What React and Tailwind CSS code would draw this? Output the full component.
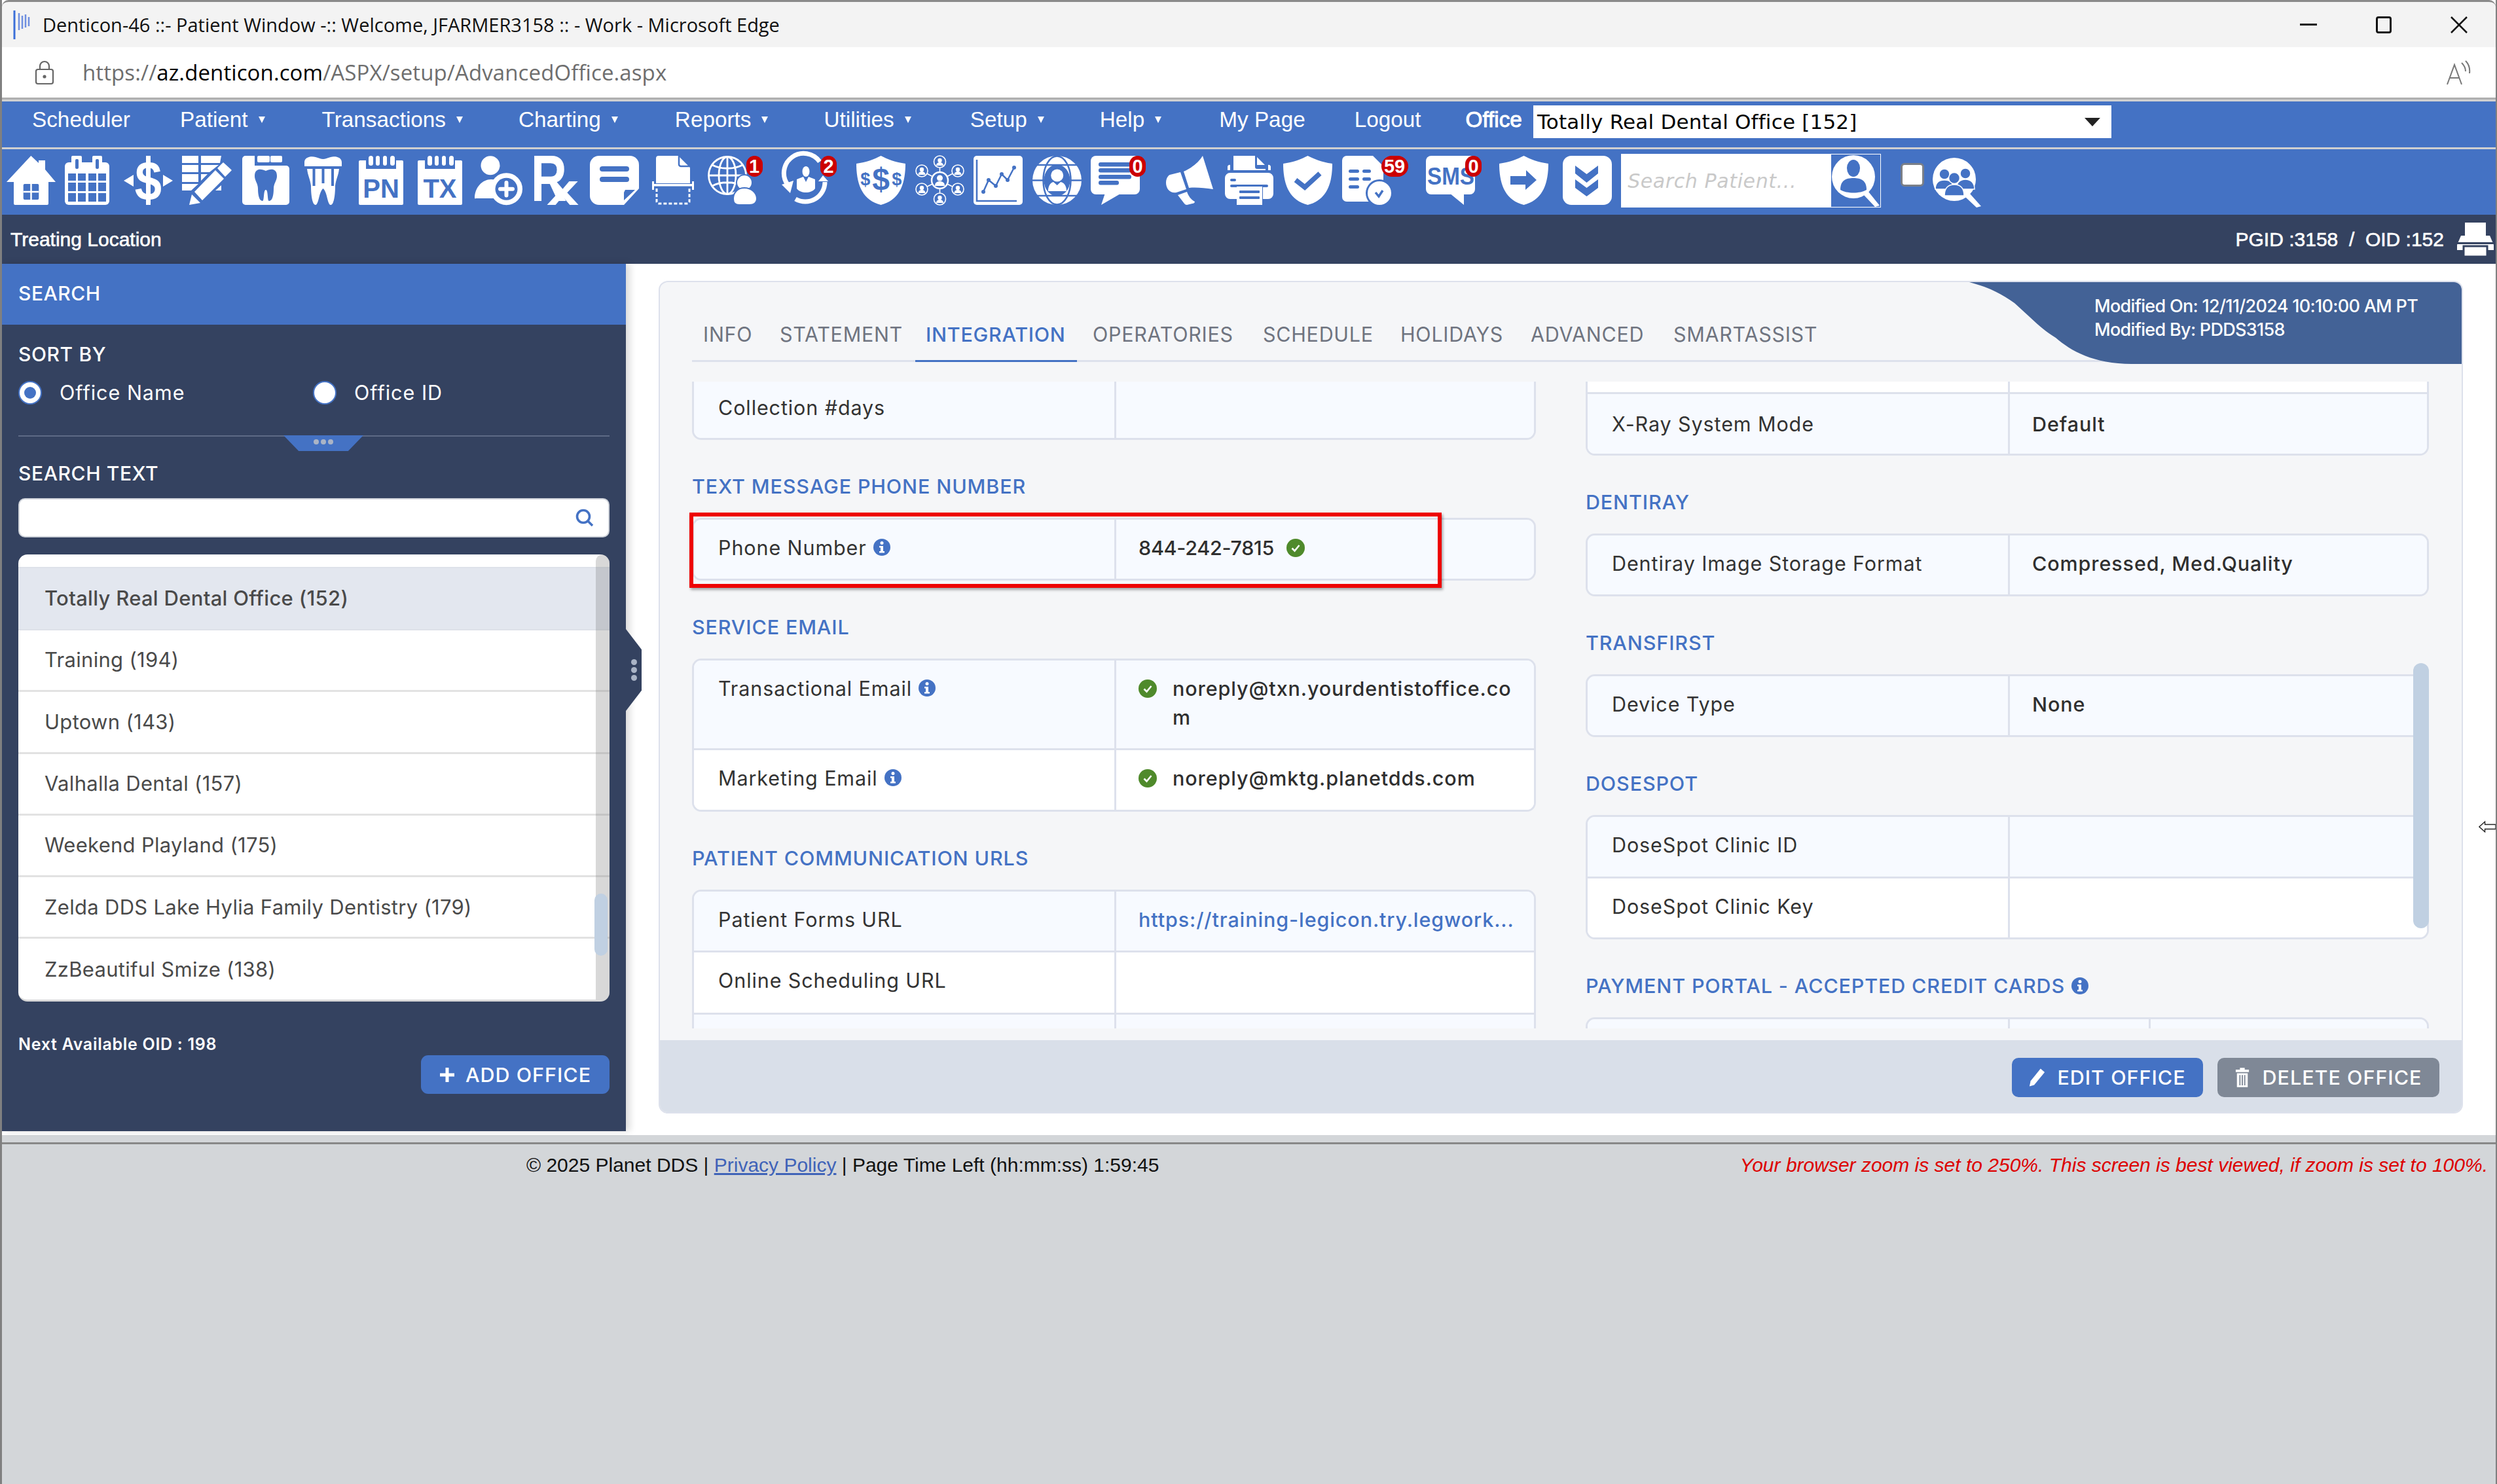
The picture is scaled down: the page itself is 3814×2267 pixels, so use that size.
import React from 'react'

const Ico = ({ children, className = '' }) => (
  <svg viewBox="0 0 75 75" fill="white" className={`w-[75px] h-[75px] shrink-0 overflow-visible ${className}`}>
    {children}
  </svg>
)

const SHIELD = 'M37.5 0C47 5 60 10 75 12C75 45 65 68 37.5 75C10 68 0 45 0 12C15 10 28 5 37.5 0Z'
const BLUE = '#4472c4'
const ARIAL = 'Liberation Sans, Arial, sans-serif'

const Badge = ({ children, className = '' }) => (
  <span className={`absolute top-0 h-[32px] rounded-full bg-[#cc0000] text-white text-[29px] leading-[32px] font-bold text-center font-['Liberation_Sans',sans-serif] ${className}`}>
    {children}
  </span>
)

const House = () => (
  <Ico>
    <path d="M37.3 0L49 11V7H59V21L75 40H64V73A2 2 0 0 1 62 75H13A2 2 0 0 1 11 73V40H0Z" />
    <rect x="25.7" y="43" width="23.6" height="24" rx="2" fill={BLUE} />
    <path d="M37.5 43V67M25.7 55H49.3" stroke="white" strokeWidth="2.5" />
  </Ico>
)

const Calendar = () => {
  const xs = [5, 20, 36, 51]
  const ys = [[27, 11], [41, 13], [57, 13]]
  return (
    <Ico>
      <rect x="0" y="10" width="68" height="65" rx="6" />
      <rect x="10" y="0" width="16" height="24" rx="2" />
      <rect x="42" y="0" width="15" height="24" rx="2" />
      <rect x="16" y="5" width="5" height="15" rx="2" fill={BLUE} />
      <rect x="47" y="5" width="5" height="15" rx="2" fill={BLUE} />
      {ys.map(([y, h]) => xs.map(x => <rect key={`${x}-${y}`} x={x} y={y} width="12" height={h} fill={BLUE} />))}
    </Ico>
  )
}

const Dollar = () => (
  <Ico>
    <rect x="34" y="0" width="7" height="75" />
    <path d="M0 38L15 29V47ZM75 38L60 29V47Z" />
    <text transform="translate(37.5 66) scale(0.82 1)" fontSize="80" fontWeight="700" textAnchor="middle" fontFamily={ARIAL}>S</text>
  </Ico>
)

const ListPencil = () => (
  <Ico>
    <path d="M0 0H25V11H0ZM29 0H60L58 11H29ZM0 14H25V25H0ZM29 14H56L42 25H29ZM0 28H25V40H0ZM29 28H39L29 38ZM0 43H25L14 53H0ZM51 53H60V45Z" />
    <path d="M51 22L64 35L31 68L19 55Z" />
    <path d="M15 59L28 72L11 75Z" />
    <path d="M55 19L63 11L75 22L66 31Z" strokeLinejoin="round" stroke="white" strokeWidth="1.5" />
  </Ico>
)

const ToothBook = () => (
  <Ico>
    <path d="M2 5A5 5 0 0 1 7 0H21V15H69A5 5 0 0 1 74 20V70A5 5 0 0 1 69 75H7A5 5 0 0 1 2 70Z" />
    <rect x="25" y="0" width="19" height="10" rx="2" />
    <rect x="45" y="0" width="18" height="10" rx="2" />
    <path d="M38 23C32 20 21 18 21 31C21 38 26 42 26 50C26 60 28 69 33 69C36 69 34 52 38 52C42 52 40 69 43 69C48 69 50 60 50 50C50 42 55 38 55 31C55 18 44 20 38 23Z" fill={BLUE} />
  </Ico>
)

const Tooth = () => (
  <Ico>
    <path d="M8 10C8 2 18 0 25 2C30 3 33 5 36.5 5C40 5 43 3 48 2C55 0 65 2 65 10V16H8Z" />
    <path d="M12 20H61C60 30 56 36 55 46C55 60 53 75 48 75C43 75 43 55 36.5 50C30 55 30 75 25 75C20 75 18 60 18 46C17 36 13 30 12 20Z" />
    <path d="M22.5 20V46M36.5 20V42M51 20V46" stroke={BLUE} strokeWidth="4" />
  </Ico>
)

const Notebook = ({ label }) => (
  <Ico>
    <rect x="2" y="7" width="68" height="68" rx="2" />
    <rect x="13" y="7" width="46" height="13" fill={BLUE} />
    <rect x="17" y="0" width="7" height="15" rx="3.5" />
    <rect x="28" y="0" width="6" height="15" rx="3" />
    <rect x="39" y="0" width="6" height="15" rx="3" />
    <rect x="50" y="0" width="7" height="15" rx="3.5" />
    <text x="36" y="64" fontSize="40" fontWeight="700" textAnchor="middle" fontFamily={ARIAL} fill={BLUE}>{label}</text>
  </Ico>
)

const PersonPlus = () => (
  <Ico>
    <circle cx="24" cy="14.7" r="14.5" />
    <path d="M0 65C0 48 12 36 25 36C30 36 33 37 36 39C31 45 28 54 29 65H2A2 2 0 0 1 0 65Z" />
    <circle cx="48.5" cy="50.7" r="24.5" />
    <circle cx="48.5" cy="50.7" r="17" fill={BLUE} />
    <path d="M48.5 41V60.5M39 50.7H58" stroke="white" strokeWidth="6" strokeLinecap="round" />
  </Ico>
)

const Rx = () => (
  <Ico>
    <text transform="translate(-4 69) scale(0.76 1)" fontSize="100" fontWeight="700" fontFamily={ARIAL}>R</text>
    <text transform="translate(20 75) scale(1.3 1)" fontSize="68" fontWeight="700" fontFamily={ARIAL}>x</text>
  </Ico>
)

const Note = () => (
  <Ico>
    <path d="M14 0H61A14 14 0 0 1 75 14V50L52 75H14A14 14 0 0 1 0 61V14A14 14 0 0 1 14 0Z" />
    <path d="M54 52H69L52 68V56Z" fill={BLUE} />
    <rect x="15" y="16" width="45" height="8" rx="4" fill={BLUE} />
    <rect x="15" y="32" width="45" height="8" rx="4" fill={BLUE} />
  </Ico>
)

const ScanDoc = () => (
  <Ico>
    <path d="M10 0H40L58 18V42H6V4A4 4 0 0 1 10 0Z" />
    <path d="M41 0V13A3 3 0 0 0 44 16H58" fill="none" stroke={BLUE} strokeWidth="2.5" />
    <rect x="0" y="43" width="64" height="3.5" />
    <path d="M1.5 39V52M62.5 39V52" stroke="white" strokeWidth="3" />
    <path d="M7 50V70A3 3 0 0 0 10 73H54A3 3 0 0 0 57 70V50" fill="none" stroke="white" strokeWidth="3" strokeDasharray="5 3" />
  </Ico>
)

const GlobePeople = () => (
  <Ico>
    <g fill="none" stroke="white" strokeWidth="2.8">
      <circle cx="30" cy="30" r="28.5" />
      <ellipse cx="30" cy="30" rx="13" ry="28.5" />
      <path d="M30 2V58M2 30H58M7 14C20 21 40 21 53 14M7 46C20 39 40 39 53 46" />
    </g>
    <circle cx="56" cy="41" r="12" stroke={BLUE} strokeWidth="2" />
    <path d="M39 66C39 56 46 49 56 49S75 56 75 66C75 72 70 75 64 75H48C43 75 39 72 39 66Z" stroke={BLUE} strokeWidth="2" />
  </Ico>
)

const RefreshPerson = () => (
  <Ico>
    <path d="M58 9A30 30 0 0 0 9 44" fill="none" stroke="white" strokeWidth="7" />
    <path d="M0 44L18 38L13 57Z" />
    <path d="M21 66A30 30 0 0 0 66 40" fill="none" stroke="white" strokeWidth="7" />
    <path d="M63 30L56 39H71Z" />
    <ellipse cx="37" cy="24" rx="5.5" ry="8" />
    <path d="M23 36C27 34 31 33 33 32L37 40L41 32C43 33 47 34 51 36V50C45 58 29 58 23 50Z" />
  </Ico>
)

const ShieldMoney = () => (
  <Ico>
    <path d={SHIELD} />
    <g fill={BLUE} fontWeight="700" textAnchor="middle" fontFamily={ARIAL}>
      <text x="13.7" y="45" fontSize="27">$</text>
      <text x="37.5" y="52" fontSize="48">$</text>
      <text x="61.7" y="45" fontSize="27">$</text>
    </g>
  </Ico>
)

const Network = () => {
  const spots = [[37.5, 9], [37.5, 66], [10, 23], [65, 23], [10, 51], [65, 51]]
  return (
    <Ico>
      {spots.map(([x, y]) => (
        <g key={`${x}-${y}`}>
          <path d={`M37.5 37.5L${x} ${y}`} stroke="white" strokeWidth="1.6" />
          <circle cx={x} cy={y} r="9" fill={BLUE} stroke="white" strokeWidth="1.6" />
          <circle cx={x} cy={y - 2} r="3.2" />
          <path d={`M${x - 5.5} ${y + 6}C${x - 5.5} ${y + 2} ${x - 2} ${y + 1} ${x} ${y + 1}S${x + 5.5} ${y + 2} ${x + 5.5} ${y + 6}Z`} />
        </g>
      ))}
      <circle cx="37.5" cy="37.5" r="12.5" fill={BLUE} stroke="white" strokeWidth="2.5" />
      <circle cx="37.5" cy="34" r="4.5" />
      <path d="M30 46C30 41 33 39 37.5 39S45 41 45 46Z" />
    </Ico>
  )
}

const Chart = () => (
  <Ico>
    <rect x="0" y="0" width="75" height="75" rx="5" />
    <path d="M5 6V69H66" fill="none" stroke={BLUE} strokeWidth="2.5" />
    <path d="M15 55L23 37L34 46L43 28L52 37L62 18" fill="none" stroke={BLUE} strokeWidth="2.5" />
    <g fill={BLUE}>
      <circle cx="15" cy="55" r="3" /><circle cx="23" cy="37" r="3" /><circle cx="34" cy="46" r="3" />
      <circle cx="43" cy="28" r="3" /><circle cx="52" cy="37" r="3" /><circle cx="62" cy="18" r="3" />
    </g>
  </Ico>
)

const GlobePerson = () => (
  <Ico>
    <circle cx="37.5" cy="37.5" r="37.5" />
    <path d="M0 14H75M0 37.5H75M0 61H75" stroke={BLUE} strokeWidth="2.5" />
    <ellipse cx="37.5" cy="37.5" rx="21" ry="37" fill="none" stroke={BLUE} strokeWidth="2.5" />
    <ellipse cx="37.5" cy="37.5" rx="20" ry="24" fill={BLUE} />
    <circle cx="37.7" cy="30" r="9.5" />
    <path d="M24 54C24 45 28 41 32 40L37.7 45L43 40C48 41 52 45 52 54Z" />
  </Ico>
)

const Message = () => (
  <Ico>
    <rect x="0" y="0" width="75" height="59" rx="8" />
    <path d="M22 57L16 75L47 57Z" />
    <rect x="12" y="10" width="50" height="6.5" rx="3" fill={BLUE} />
    <rect x="12" y="19" width="50" height="6.5" rx="3" fill={BLUE} />
    <rect x="12" y="29" width="50" height="6.5" rx="3" fill={BLUE} />
    <rect x="12" y="38" width="31" height="6.5" rx="3" fill={BLUE} />
  </Ico>
)

const Megaphone = () => (
  <Ico>
    <path d="M27 24C40 18 50 10 56 0L72 51C58 49 46 48 35 49Z" />
    <path d="M22 25L31 51L16 56C6 58 0 50 0 41C0 35 3 30 6 29Z" />
    <path d="M18 60L32 55C34 61 38 67 44 70C44 72 42 73 40 73L32 75C30 75 29 74 28 73Z" />
  </Ico>
)

const Printer = () => (
  <Ico>
    <path d="M13 0H46V17A3 3 0 0 0 49 20H62V22H13Z" />
    <path d="M49 2L61 14H49Z" />
    <path d="M4 22V17A3 3 0 0 1 8 14V22ZM66 14A3 3 0 0 1 70 17V22H66Z" />
    <path d="M8 26H66A8 8 0 0 1 74 34V58A8 8 0 0 1 66 66H58V48H18V66H8A8 8 0 0 1 0 58V34A8 8 0 0 1 8 26Z" />
    <rect x="8" y="35" width="9" height="4" rx="2" fill={BLUE} />
    <rect x="8" y="44" width="58" height="4" rx="2" fill={BLUE} />
    <rect x="18" y="47" width="39" height="28" />
    <rect x="22" y="53" width="31" height="4" rx="1" fill={BLUE} />
    <rect x="22" y="62" width="31" height="4" rx="1" fill={BLUE} />
  </Ico>
)

const ShieldCheck = () => (
  <Ico>
    <path d={SHIELD} />
    <path d="M19 37L33 48L56 27" fill="none" stroke={BLUE} strokeWidth="7.5" />
  </Ico>
)

const DocCheck = () => (
  <Ico>
    <path d="M7 0H47L63 16V70H7A7 7 0 0 1 0 63V7A7 7 0 0 1 7 0Z" />
    <g fill={BLUE}>
      <rect x="10" y="21" width="16" height="5" rx="2.5" /><rect x="31" y="21" width="13" height="5" rx="2.5" />
      <rect x="10" y="33" width="16" height="5" rx="2.5" /><rect x="31" y="33" width="13" height="5" rx="2.5" />
      <rect x="10" y="45" width="16" height="5" rx="2.5" />
    </g>
    <circle cx="57" cy="57" r="21" fill={BLUE} />
    <circle cx="57" cy="57" r="18" />
    <path d="M51 56L56 62L62 53" fill="none" stroke={BLUE} strokeWidth="3.5" />
  </Ico>
)

const Sms = () => (
  <Ico>
    <rect x="0" y="0" width="75" height="59" rx="8" />
    <path d="M36 57L58 75V57Z" />
    <text x="2" y="44" fontSize="37" fontWeight="700" textLength="72" lengthAdjust="spacingAndGlyphs" fontFamily={ARIAL} fill={BLUE}>SMS</text>
  </Ico>
)

const ShieldArrow = () => (
  <Ico>
    <path d={SHIELD} />
    <path d="M17 31H41V22L57 37L40 52V44H17Z" fill={BLUE} />
  </Ico>
)

const Chevrons = () => (
  <Ico>
    <rect x="0" y="0" width="75" height="75" rx="13" />
    <path d="M19 15L36.5 28L54 15V27L36.5 41L19 27Z" fill={BLUE} />
    <path d="M19 36L36.5 49L54 36V49L36.5 62L19 49Z" fill={BLUE} />
  </Ico>
)

const PersonSearch = () => (
  <svg viewBox="0 0 75 80" fill="white" className="w-[75px] h-[80px] bg-[#4472c4] shrink-0">
    <circle cx="34" cy="34" r="33" />
    <path d="M50 62L57 57L74 78L67 80Z" />
    <ellipse cx="34" cy="21" rx="10" ry="13" fill={BLUE} />
    <path d="M14 54C14 40 22 36 34 36S54 40 54 54C44 60 24 60 14 54Z" fill={BLUE} />
  </svg>
)

const GroupSearch = () => (
  <svg viewBox="0 0 76 76" fill="white" className="w-[76px] h-[76px] shrink-0">
    <circle cx="35" cy="33" r="33" />
    <path d="M52 60L59 55L76 74L69 76Z" />
    <g fill={BLUE} stroke="white" strokeWidth="1.5">
      <circle cx="20" cy="25" r="8" /><circle cx="52" cy="24" r="8" />
      <path d="M6 48C6 38 12 34 20 34S34 38 34 48Z" />
      <path d="M38 48C38 38 44 33 52 33S66 38 66 48Z" />
      <circle cx="35" cy="31" r="8.5" />
      <path d="M20 58C20 46 26 41 35 41S50 46 50 58Z" />
    </g>
  </svg>
)

const PrintSmall = () => (
  <svg viewBox="0 0 56 52" fill="white" className="w-[56px] h-[52px]">
    <rect x="12" y="0" width="32" height="24" />
    <path d="M6 20H50L56 34V42H0V34Z" />
    <rect x="10" y="36" width="36" height="16" stroke="#344260" strokeWidth="3" />
    <rect x="0" y="30" width="56" height="3" fill="#344260" />
  </svg>
)

const InfoDot = () => (
  <svg viewBox="0 0 26 26" className="w-[26px] h-[26px] shrink-0 ml-[10px]">
    <circle cx="13" cy="13" r="13" fill={BLUE} />
    <circle cx="13" cy="6.5" r="2.5" fill="white" />
    <path d="M9 11H15V19H17V21.5H9V19H11V13.5H9Z" fill="white" />
  </svg>
)

const GreenCheck = ({ className = '' }) => (
  <svg viewBox="0 0 28 28" className={`w-[28px] h-[28px] shrink-0 ${className}`}>
    <circle cx="14" cy="14" r="14" fill="#4f8a2b" />
    <path d="M8.5 14.5L12.5 18.5L19.5 10" fill="none" stroke="white" strokeWidth="2.6" />
  </svg>
)

const MenuItem = ({ label, caret, className = '' }) => (
  <div className={`flex items-center gap-[16px] mb-[6px] ${className}`}>
    <span>{label}</span>
    {caret && <span className="w-0 h-0 border-x-[5px] border-x-transparent border-t-[10px] border-t-white" />}
  </div>
)

const SectionTitle = ({ children, info }) => (
  <div className="flex items-center h-[40px] mt-[51px] mb-[28px] text-[30.5px] font-medium text-[#4472c4] tracking-[0.85px]">
    {children}
    {info && <InfoDot />}
  </div>
)

const Table = ({ children, className = '', open }) => (
  <div className={`border-[3px] border-[#dde1ec] overflow-hidden bg-white ${open ? 'border-t-0 rounded-b-[14px]' : 'rounded-[14px]'} ${className}`}>
    {children}
  </div>
)

const Row = ({ label, info, children, tall, alt, last, height = '', pad = 'pt-[21px]' }) => (
  <div className={`flex text-[30.5px] leading-[44px] text-[#333] ${alt ? 'bg-white' : 'bg-[#f7faff]'} ${last ? '' : 'border-b-[3px] border-[#dde1ec]'} ${height || (tall ? 'h-[137px]' : last ? 'h-[90px]' : 'h-[93px]')}`}>
    <div className={`w-[645px] shrink-0 flex items-start pl-[37px] tracking-[0.9px] border-r-[3px] border-[#dde1ec] ${pad}`}>
      {label}
      {info && <span className="mt-[8px]"><InfoDot /></span>}
    </div>
    <div className={`flex-1 pl-[34px] font-medium min-w-0 text-[#2f2f2f] tracking-[0.9px] ${pad}`}>{children}</div>
  </div>
)

const offices = ['Training (194)', 'Uptown (143)', 'Valhalla Dental (157)', 'Weekend Playland (175)', 'Zelda DDS Lake Hylia Family Dentistry (179)', 'ZzBeautiful Smize (138)']

export default function App() {
  return (
    <div className="relative w-[3814px] h-[2267px] overflow-hidden flex flex-col bg-white border-l-[3px] border-r-[2px] border-[#808080] font-['Inter',sans-serif]">
      {/* browser chrome */}
      <div className="h-[72px] shrink-0 bg-[#f3f3f3] border-t-[3px] border-[#8a8a8a] rounded-t-[10px] flex items-center pl-[17px] pr-[43px] font-['Open_Sans',sans-serif] text-[29px] text-[#111]">
        <svg viewBox="0 0 28 44" className="w-[28px] h-[44px] mr-[17px]">
          <path d="M2 0V44" stroke="#3b6fd8" strokeWidth="3" />
          <path d="M9 4V30M14 8V28M19 6V26M24 10V24" stroke="#6f8fe0" strokeWidth="2.5" />
        </svg>
        <span>Denticon-46 ::- Patient Window -:: Welcome, JFARMER3158 :: - Work - Microsoft Edge</span>
        <div className="ml-auto flex items-center gap-[90px]">
          <span className="w-[26px] h-[3px] bg-[#111]" />
          <span className="w-[24px] h-[26px] border-[3px] border-[#111] rounded-[4px]" />
          <svg viewBox="0 0 26 26" className="w-[26px] h-[26px]"><path d="M1 1L25 25M25 1L1 25" stroke="#111" strokeWidth="2.5" /></svg>
        </div>
      </div>
      <div className="h-[80px] shrink-0 bg-white border-b-[3px] border-[#b0b0b0] flex items-center pl-[50px] pr-[38px] font-['Open_Sans',sans-serif] text-[33px] text-[#6e6e6e]">
        <svg viewBox="0 0 30 38" className="w-[30px] h-[38px] mr-[43px]" fill="none" stroke="#666" strokeWidth="2.2">
          <rect x="2" y="14" width="26" height="22" rx="3" />
          <path d="M8 14V9A7 7 0 0 1 22 9V14" />
          <circle cx="15" cy="25" r="1.5" fill="#666" />
        </svg>
        <span className="tracking-[0.1px]">https://<span className="text-black">az.denticon.com</span>/ASPX/setup/AdvancedOffice.aspx</span>
        <svg viewBox="0 0 38 38" className="w-[38px] h-[38px] ml-auto" fill="none" stroke="#777" strokeWidth="2">
          <path d="M2 37L13 7L24 37M6 27H20" />
          <path d="M24 4C28 8 30 12 30 17M30 1C35 6 37 12 36 20" />
        </svg>
      </div>
      <div className="h-[3px] shrink-0 bg-[#d0d0d0]" />

      {/* app menu */}
      <div className="h-[70px] shrink-0 bg-[#4472c4] flex items-center pl-[46px] pb-[8px] text-white text-[33.3px] font-['Liberation_Sans',sans-serif]">
        <MenuItem label="Scheduler" className="mr-[76px]" />
        <MenuItem label="Patient" caret className="mr-[87px]" />
        <MenuItem label="Transactions" caret className="mr-[85px]" />
        <MenuItem label="Charting" caret className="mr-[87px]" />
        <MenuItem label="Reports" caret className="mr-[85px]" />
        <MenuItem label="Utilities" caret className="mr-[90px]" />
        <MenuItem label="Setup" caret className="mr-[85px]" />
        <MenuItem label="Help" caret className="mr-[88px]" />
        <MenuItem label="My Page" className="mr-[75px]" />
        <MenuItem label="Logout" className="mr-[68px]" />
        <span className="[-webkit-text-stroke:1px_white] mr-[17px] mb-[6px]">Office</span>
        <div className="w-[883px] h-[50px] bg-white flex items-center justify-between pl-[6px] pr-[17px] text-black text-[31px] font-['DejaVu_Sans',sans-serif]">
          <span className="tracking-[0.2px]">Totally Real Dental Office [152]</span>
          <span className="w-0 h-0 border-x-[12px] border-x-transparent border-t-[13px] border-t-[#222]" />
        </div>
      </div>
      <div className="h-[3px] shrink-0 bg-[#d0d0d0]" />

      {/* toolbar */}
      <div className="h-[100px] shrink-0 bg-[#4472c4] flex items-start gap-[14.4px] pl-[7px] pt-[10px]">
        <House />
        <Calendar />
        <Dollar />
        <ListPencil />
        <ToothBook />
        <Tooth />
        <Notebook label="PN" />
        <Notebook label="TX" />
        <PersonPlus />
        <Rx />
        <div className="shrink-0 -ml-[3px]"><Note /></div>
        <div className="shrink-0 ml-[6px]"><ScanDoc /></div>
        <div className="relative shrink-0 -ml-[5px]"><GlobePeople /><Badge className="w-[25px] -right-[9px]">1</Badge></div>
        <div className="relative shrink-0 ml-[24px]"><RefreshPerson /><Badge className="w-[25px] -right-[9px]">2</Badge></div>
        <div className="shrink-0 ml-[25px]"><ShieldMoney /></div>
        <Network />
        <Chart />
        <GlobePerson />
        <div className="relative shrink-0"><Message /><Badge className="w-[25px] -right-[9px]">0</Badge></div>
        <div className="shrink-0 ml-[26px]"><Megaphone /></div>
        <Printer />
        <ShieldCheck />
        <div className="relative shrink-0"><DocCheck /><Badge className="w-[41px] -right-[26px]">59</Badge></div>
        <div className="relative shrink-0 ml-[39px]"><Sms /><Badge className="w-[25px] -right-[10px]">0</Badge></div>
        <div className="shrink-0 ml-[23px]"><ShieldArrow /></div>
        <div className="shrink-0 ml-[7px]"><Chevrons /></div>
        <div className="w-[397px] h-[82px] -mt-[3px] shrink-0 bg-white flex items-center justify-between pl-[10px] pr-[1px]">
          <span className="font-['DejaVu_Sans',sans-serif] italic text-[30px] text-[#c9c9c9] tracking-[0.6px]">Search Patient...</span>
          <PersonSearch />
        </div>
        <span className="w-[36px] h-[36px] mt-[11px] ml-[15px] shrink-0 bg-white rounded-[6px] border-[3px] border-[#7a7f88]" />
        <div className="-ml-[3px] mt-[3px] shrink-0"><GroupSearch /></div>
      </div>

      {/* treating location */}
      <div className="h-[75px] shrink-0 bg-[#344260] flex items-center justify-between pl-[13px] pr-[3px] text-white text-[30px] font-['Liberation_Sans',sans-serif]">
        <span className="[-webkit-text-stroke:0.6px_white]">Treating Location</span>
        <div className="flex items-center gap-[20px]">
          <span className="[-webkit-text-stroke:0.6px_white]">PGID :3158&nbsp; /&nbsp; OID :152</span>
          <PrintSmall />
        </div>
      </div>

      <div className="h-[1325px] shrink-0 flex bg-white">
        {/* office sidebar */}
        <aside className="relative w-[953px] shrink-0 bg-[#344260] shadow-[6px_0_10px_rgba(0,0,0,0.15)] flex flex-col text-white">
          <div className="h-[93px] shrink-0 bg-[#4472c4] flex items-center pl-[25px] pb-[3px] text-[30px] font-medium tracking-[0.5px]">SEARCH</div>
          <div className="px-[25px] flex flex-col">
            <div className="mt-[25px] h-[40px] flex items-center text-[30px] font-medium tracking-[0.6px]">SORT BY</div>
            <div className="mt-[21px] h-[36px] flex items-center text-[30.5px] tracking-[1px]">
              <span className="w-[36px] h-[36px] rounded-full bg-white border-[2px] border-[#4472c4] flex items-center justify-center">
                <span className="w-[18px] h-[18px] rounded-full bg-[#4472c4]" />
              </span>
              <span className="ml-[27px] w-[387px]">Office Name</span>
              <span className="w-[36px] h-[36px] rounded-full bg-white border-[2px] border-[#4472c4]" />
              <span className="ml-[27px]">Office ID</span>
            </div>
            <div className="relative mt-[47px] h-[2px] bg-[#5d6a85]">
              <div className="absolute left-[405px] top-0 w-[122px] h-[24px] bg-[#4472c4] [clip-path:polygon(0_0,100%_0,81%_100%,19%_100%)] flex justify-center gap-[3px] pt-[6px]">
                <span className="w-[8px] h-[8px] rounded-full bg-[#aab4c6]" />
                <span className="w-[8px] h-[8px] rounded-full bg-[#aab4c6]" />
                <span className="w-[8px] h-[8px] rounded-full bg-[#aab4c6]" />
              </div>
            </div>
            <div className="mt-[36px] h-[40px] flex items-center text-[30px] font-medium tracking-[0.6px]">SEARCH TEXT</div>
            <div className="mt-[18px] h-[60px] bg-white rounded-[10px] border-[2px] border-[#cfd3da] flex items-center justify-end pr-[22px]">
              <svg viewBox="0 0 28 28" className="w-[28px] h-[28px]" fill="none" stroke="#4472c4" strokeWidth="3.6">
                <circle cx="12" cy="12" r="9.5" />
                <path d="M19 19L26 26" />
              </svg>
            </div>
            {/* office list */}
            <div className="relative mt-[26px] h-[683px] bg-white rounded-[14px] overflow-hidden border-b-[3px] border-[#d8d8d8] text-[31px] text-[#4a4a4a] tracking-[0.3px]">
              <div className="h-[21px] border-b-[2px] border-[#dee2ea]" />
              <div className="h-[95px] bg-[#e3e7ef] flex items-center pl-[40px] font-medium border-b-[2px] border-[#dde1e8]">Totally Real Dental Office (152)</div>
              {offices.map((name, i) => (
                <div key={name} className={`h-[94.3px] flex items-center pl-[40px] ${i < offices.length - 1 ? 'border-b-[3px] border-[#e2e2e2]' : ''}`}>{name}</div>
              ))}
              <div className="absolute right-0 top-0 bottom-0 w-[21px] bg-[#7d7d7d]/30 rounded-t-[10px]" />
              <div className="absolute right-[3px] top-[518px] w-[20px] h-[95px] bg-[#c0d0e2] rounded-[10px]" />
            </div>
            <div className="mt-[51px] h-[30px] flex items-center text-[25px] font-semibold tracking-[0.7px]">Next Available OID : 198</div>
            <button className="self-end mt-[1px] w-[288px] h-[59px] bg-[#4472c4] rounded-[11px] flex items-center justify-center gap-[16px] text-[30.5px] font-medium tracking-[1px]">
              <svg viewBox="0 0 24 24" className="w-[24px] h-[24px]" fill="white"><path d="M9.5 1H14.5V9.5H23V14.5H14.5V23H9.5V14.5H1V9.5H9.5Z" /></svg>
              ADD OFFICE
            </button>
          </div>
          <div className="absolute -right-[24px] top-[558px] w-[24px] h-[125px] bg-[#344260] [clip-path:polygon(0_0,100%_25%,100%_75%,0_100%)] flex flex-col items-center justify-center gap-[3px]">
            <span className="w-[9px] h-[9px] rounded-full bg-[#aab4c6]" />
            <span className="w-[9px] h-[9px] rounded-full bg-[#aab4c6]" />
            <span className="w-[9px] h-[9px] rounded-full bg-[#aab4c6]" />
          </div>
        </aside>

        {/* office detail panel */}
        <main className="relative flex-1 mt-[26px] mb-[27px] ml-[50px] mr-[50px] bg-[#f5f6f8] border-[2px] border-[#dde1ec] rounded-[14px] overflow-hidden flex flex-col">
          <div className="h-[122px] shrink-0 flex items-end pl-[49px] pr-0">
            <div className="flex-1 flex items-end border-b-[3px] border-[#dde1ec] pl-[1px] text-[30.5px] text-[#6f7480] tracking-[0.7px] whitespace-nowrap">
              <span className="w-[109px] pl-[16px] pb-[16px]">INFO</span>
              <span className="w-[215px] ml-[8px] pl-[16px] pb-[16px]">STATEMENT</span>
              <span className="w-[247px] ml-[8px] pl-[16px] pb-[16px] -mb-[3px] border-b-[3px] border-[#4472c4] text-[#4472c4] font-medium">INTEGRATION</span>
              <span className="w-[252px] ml-[8px] pl-[16px] pb-[16px]">OPERATORIES</span>
              <span className="w-[202px] ml-[8px] pl-[16px] pb-[16px]">SCHEDULE</span>
              <span className="w-[191px] ml-[8px] pl-[16px] pb-[16px]">HOLIDAYS</span>
              <span className="w-[210px] ml-[8px] pl-[16px] pb-[16px]">ADVANCED</span>
              <span className="ml-[8px] pl-[16px] pb-[16px]">SMARTASSIST</span>
            </div>
          </div>
          <svg viewBox="0 0 752 125" className="absolute top-0 right-0 w-[752px] h-[125px]">
            <path d="M0 0C30 8 50 18 69 32C95 55 110 72 132 85C155 105 190 125 248 125H752V0Z" fill="#436296" />
          </svg>
          <div className="absolute top-[19px] left-[2191px] text-white text-[27px] leading-[36px] font-medium tracking-[-0.7px]">
            <div>Modified On: 12/11/2024 10:10:00 AM PT</div>
            <div>Modified By: PDDS3158</div>
          </div>

          <div className="relative h-[988px] mt-[30px] shrink-0 overflow-hidden flex gap-[76px] pl-[49px]">
            <div className="w-[1289px] shrink-0">
              <Table open><Row label="Collection #days" last height="h-[86px]" pad="pt-[18px]" /></Table>
              <SectionTitle>TEXT MESSAGE PHONE NUMBER</SectionTitle>
              <div className="relative">
                <Table>
                  <Row label="Phone Number" info last>
                    <span className="flex items-center tracking-[-0.3px]">844-242-7815<GreenCheck className="ml-[19px]" /></span>
                  </Row>
                </Table>
                <div className="absolute -left-[4px] -top-[8px] w-[1149px] h-[115px] border-[6px] border-[#ee0000] shadow-[2px_3px_4px_rgba(0,0,0,0.35)]" />
              </div>
              <SectionTitle>SERVICE EMAIL</SectionTitle>
              <Table>
                <Row label="Transactional Email" info tall>
                  <span className="flex items-start"><GreenCheck className="mt-[8px] mr-[24px]" /><span>noreply@txn.yourdentistoffice.co<br />m</span></span>
                </Row>
                <Row label="Marketing Email" info alt last height="h-[91px]">
                  <span className="flex items-start"><GreenCheck className="mt-[8px] mr-[24px]" />noreply@mktg.planetdds.com</span>
                </Row>
              </Table>
              <SectionTitle>PATIENT COMMUNICATION URLS</SectionTitle>
              <Table>
                <Row label="Patient Forms URL"><span className="text-[#4472c4]">https://training-legicon.try.legwork...</span></Row>
                <Row label="Online Scheduling URL" alt height="h-[95px]" />
                <Row label="" />
              </Table>
            </div>

            <div className="w-[1288px] shrink-0">
              <Table open>
                <div className="h-[19px] bg-white flex border-b-[3px] border-[#dde1ec]">
                  <div className="w-[645px] border-r-[3px] border-[#dde1ec]" />
                </div>
                <Row label="X-Ray System Mode" last pad="pt-[24px]" height="h-[91px]">Default</Row>
              </Table>
              <SectionTitle>DENTIRAY</SectionTitle>
              <Table><Row label="Dentiray Image Storage Format" last>Compressed, Med.Quality</Row></Table>
              <SectionTitle>TRANSFIRST</SectionTitle>
              <Table><Row label="Device Type" last>None</Row></Table>
              <SectionTitle>DOSESPOT</SectionTitle>
              <Table>
                <Row label="DoseSpot Clinic ID" height="h-[94px]" />
                <Row label="DoseSpot Clinic Key" alt last height="h-[90px]" />
              </Table>
              <SectionTitle info>PAYMENT PORTAL - ACCEPTED CREDIT CARDS</SectionTitle>
              <Table>
                <div className="h-[92px] bg-[#f7faff] flex">
                  <div className="w-[645px] border-r-[3px] border-[#dde1ec]" />
                  <div className="w-[215px] border-r-[3px] border-[#dde1ec]" />
                </div>
              </Table>
            </div>
            <div className="absolute top-[430px] left-[2678px] w-[24px] h-[405px] bg-[#c0d0e2] rounded-[12px]" />
          </div>

          <div className="absolute bottom-0 left-0 right-0 h-[110px] bg-[#d9dfe9] flex items-center justify-end gap-[22px] pr-[34px] pt-[3px] text-[30.5px] font-medium text-white tracking-[1px]">
            <button className="w-[292px] h-[60px] bg-[#4472c4] rounded-[10px] flex items-center justify-center gap-[18px]">
              <svg viewBox="0 0 28 32" className="w-[25px] h-[30px]" fill="white"><path d="M20 1L27 7L9 29L1 31L3 22Z" /></svg>
              EDIT OFFICE
            </button>
            <button className="w-[339px] h-[60px] bg-[#7f8896] rounded-[10px] flex items-center justify-center gap-[20px]">
              <svg viewBox="0 0 24 32" className="w-[22px] h-[30px]" fill="white">
                <path d="M8 0H16V3H23V7H1V3H8ZM3 9H21V32H3Z" />
                <path d="M8 12V29M12 12V29M16 12V29" stroke="#7f8896" strokeWidth="2" />
              </svg>
              DELETE OFFICE
            </button>
          </div>
        </main>
      </div>

      {/* page footer */}
      <div className="flex-1 mt-[6px] bg-[#d3d6d9] font-['Liberation_Sans',sans-serif] text-[30px]">
        <div className="mt-[11px] h-[3px] bg-[#888]" />
        <div className="flex justify-between pl-[801px] pr-[12px] pt-[9px]">
          <span className="text-[#111]">© 2025 Planet DDS | <span className="text-[#3f63b8] underline">Privacy Policy</span> | Page Time Left (hh:mm:ss) 1:59:45</span>
          <span className="italic text-[#dd0000]">Your browser zoom is set to 250%. This screen is best viewed, if zoom is set to 100%.</span>
        </div>
      </div>

      {/* resize cursor */}
      <svg viewBox="0 0 30 22" className="absolute right-0 top-[1252px] w-[26px] h-[22px]" fill="white" stroke="#222" strokeWidth="1.6">
        <path d="M1 11L11 2V7H30V15H11V20Z" />
      </svg>
    </div>
  )
}
